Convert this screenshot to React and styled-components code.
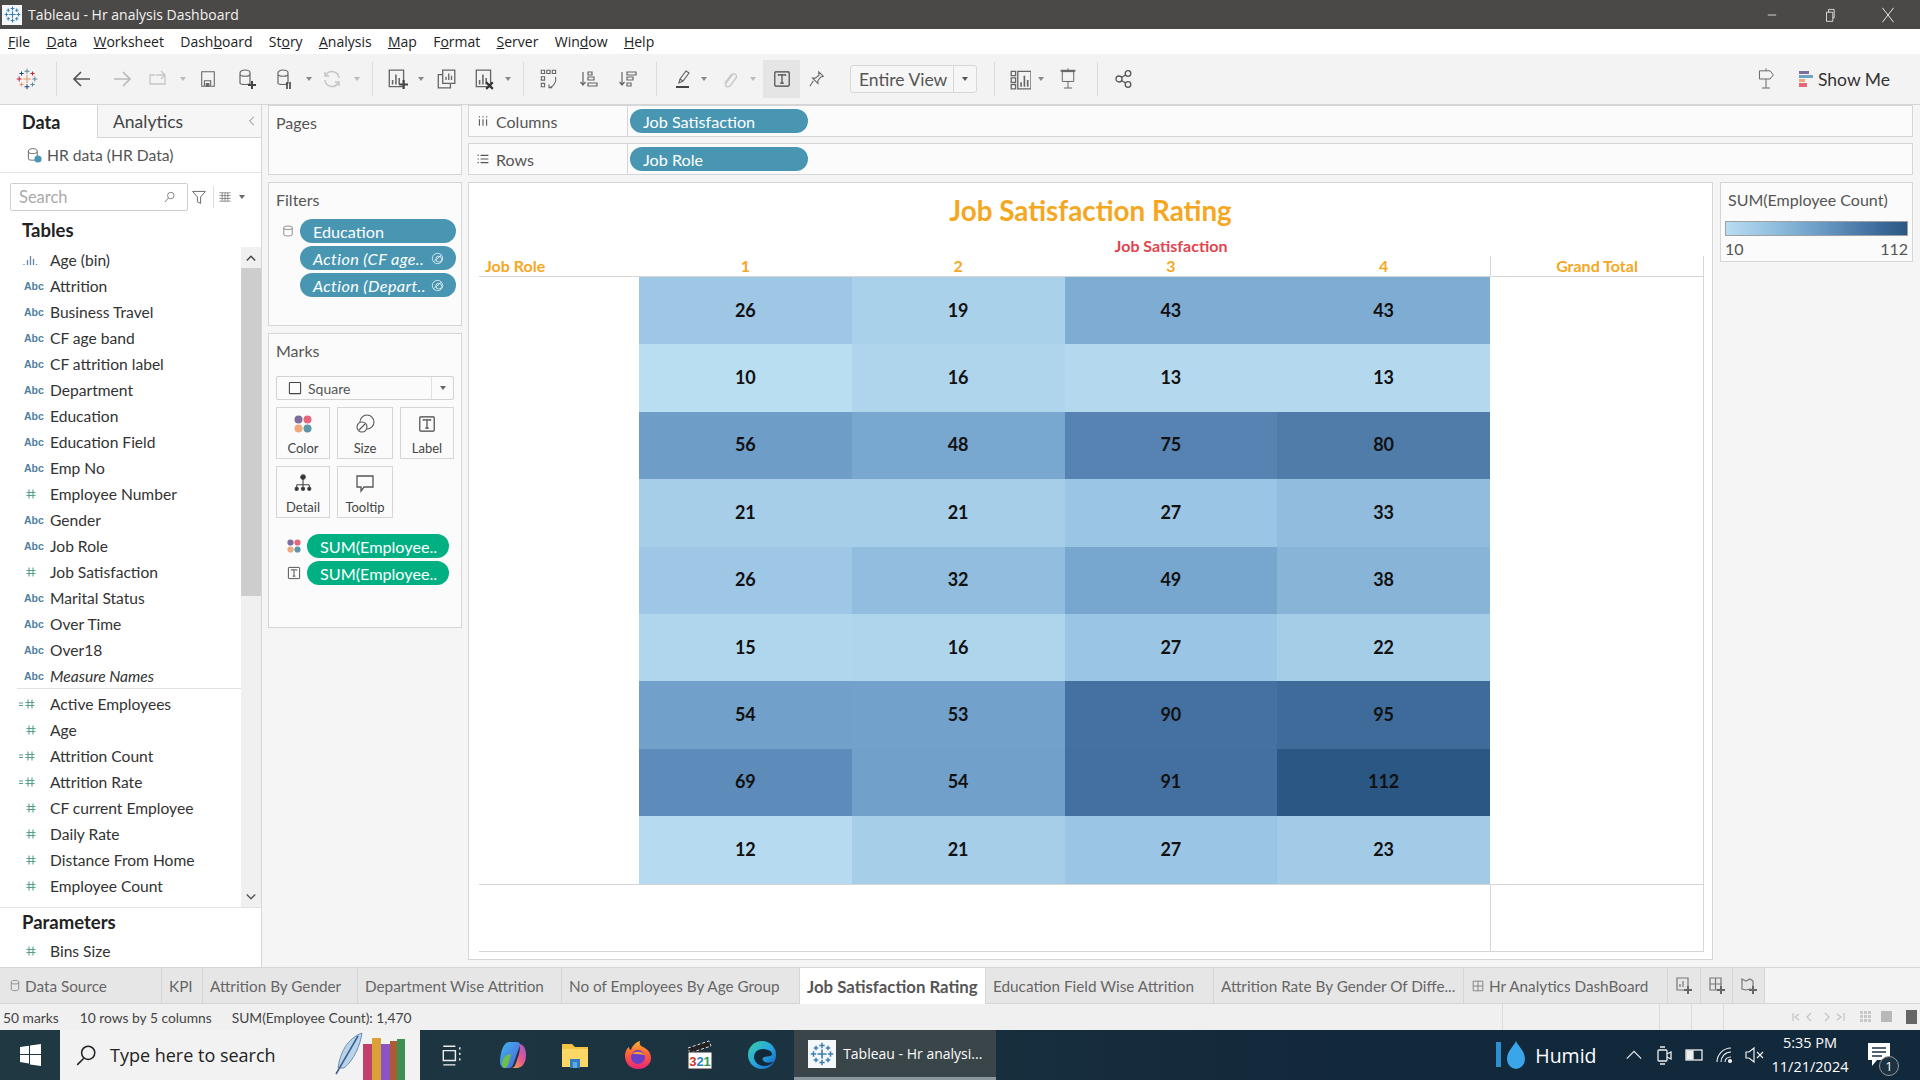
import React from "react";
import styled, { createGlobalStyle } from "styled-components";

const SEGOE = `"Open Sans","Noto Sans",sans-serif`;
const BOOK = `Lato,"Open Sans",sans-serif`;
const LINE = "#d6d6d6";

const Global = createGlobalStyle`
  html, body { margin: 0; padding: 0; background: #fff; }
  * { box-sizing: border-box; }
`;

const Shell = styled.div`
  width: 1920px; height: 1080px; overflow: hidden;
  display: flex; flex-direction: column;
  font-family: ${BOOK}; color: #333;
`;

/* ---------- title / menu ---------- */
const TitleBar = styled.div`
  height: 29px; flex: none; background: #4a4947; color: #f2f2f2;
  display: flex; align-items: center; padding: 0 3px 0 2px;
  font: 14px ${SEGOE};
`;
const TitleText = styled.span`margin-left: 6px; flex: 1;`;
const WinBtn = styled.div`
  width: 58px; height: 29px; display: flex; align-items: center; justify-content: center;
`;
const MenuBar = styled.div`
  height: 25px; flex: none; background: #fff; display: flex; align-items: center;
  gap: 16.3px; padding-left: 8px; font: 14px ${SEGOE}; color: #222;
`;
const MenuItem = styled.span``;

/* ---------- toolbar ---------- */
const Toolbar = styled.div`
  height: 51px; flex: none; background: #f3f3f3; border-bottom: 1px solid ${LINE};
  display: flex; align-items: center;
`;
const ToolSlot = styled.div`
  flex: none; display: flex; align-items: center; justify-content: center;
  width: ${p => p.$w}px; margin-left: ${p => p.$ml}px;
  height: ${p => p.$h || 30}px;
  background: ${p => p.$active ? "#e5e5e5" : "transparent"};
`;
const ToolSep = styled.div`
  flex: none; width: 1px; height: 34px; background: #dcdcdc; margin-left: ${p => p.$ml}px;
`;
const Caret = styled.span`
  display: block; width: 0; height: 0;
  border-left: 3px solid transparent; border-right: 3px solid transparent;
  border-top: 4px solid ${p => p.$c || "#777"};
`;
const ViewSelect = styled.div`
  flex: none; margin-left: ${p => p.$ml}px; width: 127px; height: 28px;
  border: 1px solid #d8d8d8; border-radius: 3px; background: #f6f6f6;
  display: flex; align-items: center; font-size: 17.5px; color: #555;
`;
const ViewSelectText = styled.span`flex: 1; padding-left: 8px; white-space: nowrap;`;
const ViewSelectArrow = styled.span`
  width: 23px; height: 100%; border-left: 1px solid #d8d8d8;
  display: flex; align-items: center; justify-content: center;
`;
const ToolSpacer = styled.div`flex: 1;`;
const ShowMe = styled.div`
  flex: none; display: flex; align-items: center; gap: 5px; margin-right: 30px; margin-left: 24px;
  font-size: 17.5px; color: #333;
`;

/* ---------- main ---------- */
const Main = styled.div`
  height: 862px; flex: none; display: flex; background: #f5f5f5;
`;
const DataPane = styled.div`
  width: 262px; flex: none; background: #fff; border-right: 1px solid ${LINE};
  display: flex; flex-direction: column;
`;
const PaneTabs = styled.div`display: flex; height: 33px; flex: none;`;
const PaneTab = styled.div`
  width: ${p => p.$w}px; flex: ${p => p.$grow ? 1 : "none"};
  display: flex; align-items: center; justify-content: space-between;
  font-size: ${p => p.$on ? 18 : 17.5}px; font-weight: ${p => p.$on ? 700 : 400};
  padding: 0 3px 0 ${p => p.$on ? 22 : 15}px;
  color: ${p => p.$on ? "#222" : "#444"};
  background: ${p => p.$on ? "#fff" : "#f6f6f6"};
  border-left: ${p => p.$on ? "none" : `1px solid ${LINE}`};
  border-bottom: ${p => p.$on ? "none" : `1px solid ${LINE}`};
`;
const SourceRow = styled.div`
  height: 35px; flex: none; display: flex; align-items: center; gap: 5px; padding-left: 26px;
  font-size: 15.7px; color: #555; border-bottom: 1px solid #e2e2e2;
`;
const SearchRow = styled.div`
  height: 38px; flex: none; display: flex; align-items: center; padding: 10px 0 0 10px;
`;
const SearchBox = styled.div`
  width: 178px; height: 28px; border: 1px solid #cfcfcf; border-radius: 2px; background: #fff;
  display: flex; align-items: center; justify-content: space-between; padding: 0 11px 0 8px;
  font-size: 16.5px; color: #aaa;
`;
const SearchTools = styled.div`display: flex; align-items: center; margin-left: 3px; gap: 0;`;
const ToolDiv = styled.div`width: 1px; height: 22px; background: #ddd; margin: 0 4px 0 6px;`;
const CaretSlot = styled.span`margin-left: 7px;`;
const SectionHead = styled.div`
  flex: none; height: ${p => p.$h}px; display: flex; align-items: center; padding: ${p => p.$pt || 0}px 0 ${p => p.$pb || 0}px 22px;
  font-size: 18.5px; font-weight: 700; color: #222;
  border-top: ${p => p.$line ? "1px solid #e2e2e2" : "none"};
`;
const ListWrap = styled.div`height: 660px; flex: none; display: flex;`;
const Fields = styled.div`width: 241px; flex: none;`;
const FieldRow = styled.div`
  height: 26px; display: flex; align-items: center; font-size: 15.6px; color: #333;
  font-style: ${p => p.$it ? "italic" : "normal"};
`;
const FieldIcon = styled.span`
  width: 50px; padding-left: 22px; flex: none; display: flex; align-items: center;
`;
const AbcMark = styled.span`
  font: 700 10.5px "Liberation Sans", sans-serif; color: #4f7f9f; margin-left: 2px;
`;
const FieldDivider = styled.div`height: 1px; background: #e2e2e2; margin: -1px 0 2px 17px;`;
const Scroll = styled.div`
  width: 20px; flex: none; background: #f0f0f0; display: flex; flex-direction: column;
`;
const ScrollBtn = styled.div`
  height: 21px; display: flex; align-items: center; justify-content: center; flex: none;
`;
const ScrollThumb = styled.div`height: 328px; flex: none; background: #cdcdcd;`;
const ScrollFill = styled.div`flex: 1;`;

const CardsCol = styled.div`
  width: 194px; flex: none; margin-left: 6px; display: flex; flex-direction: column; gap: 7px;
`;
const Card = styled.div`
  flex: none; height: ${p => p.$h}px; background: #fbfbfb; border: 1px solid ${LINE};
  padding: 7px 7px 0 7px; 
`;
const CardTitle = styled.div`font-size: 16px; line-height: 20px; color: #555;`;
const FilterList = styled.div`
  margin-top: 9px; display: flex; flex-direction: column; gap: 3px;
`;
const FilterRow = styled.div`
  display: grid; grid-template-columns: 24px 156px; margin-right: -5px; align-items: center;
`;
const Pill = styled.div`
  height: 24px; border-radius: 12px; background: ${p => p.$c || "#4996b3"}; color: #fff;
  display: flex; align-items: center; justify-content: space-between;
  padding: 0 12px 0 ${p => p.$pad || 13}px; width: ${p => p.$w ? p.$w + "px" : "auto"};
  font-size: 16.2px; font-style: ${p => p.$it ? "italic" : "normal"}; white-space: nowrap;
  letter-spacing: ${p => p.$it ? 0.4 : 0}px;
  margin-left: ${p => p.$ml || 0}px;
`;
const MarkSelect = styled.div`
  margin-top: 15px; height: 24px; border: 1px solid #d2d2d2; border-radius: 2px;
  background: #fbfbfb; display: flex; align-items: center; font-size: 14px; color: #555;
`;
const MarkSelectLabel = styled.span`
  flex: 1; display: flex; align-items: center; gap: 6px; padding-left: 11px;
`;
const MarkSelectArrow = styled.span`
  width: 22px; height: 100%; border-left: 1px solid #e0e0e0;
  display: flex; align-items: center; justify-content: center;
`;
const MarkGrid = styled.div`
  margin-top: 7px; display: grid; grid-template-columns: 54px 56px 54px;
  grid-auto-rows: 52px; gap: 7px;
`;
const MarkBtn = styled.div`
  border: 1px solid ${LINE}; display: flex; flex-direction: column; align-items: center;
  justify-content: flex-end; padding-bottom: 2px; font-size: 13px; color: #444; gap: 2px;
`;
const MarkIconBox = styled.div`height: 28px; display: flex; align-items: center; justify-content: center;`;
const MarkPills = styled.div`
  margin-top: 16px; display: flex; flex-direction: column; gap: 3px;
`;
const MarkRow = styled.div`
  display: grid; grid-template-columns: 31px 142px; align-items: center; justify-items: start;
`;
const MarkRowIcon = styled.div`display: flex; justify-content: center; width: 20px; margin-left: 8px;`;

const RightCol = styled.div`
  flex: 1; margin: 0 7px 7px 6px; display: flex; flex-direction: column; min-width: 0;
`;
const Shelf = styled.div`
  height: 32px; flex: none; margin-bottom: ${p => p.$mb}px; background: #fbfbfb;
  border: 1px solid ${LINE}; display: flex; align-items: center;
`;
const ShelfLabel = styled.div`
  width: 159px; height: 100%; flex: none; border-right: 1px solid ${LINE};
  display: flex; align-items: center; gap: 7px; padding-left: 8px; font-size: 16px; color: #555;
`;
const Canvas = styled.div`flex: 1; display: flex; gap: 7px; min-height: 0;`;
const ViewBox = styled.div`
  width: 1245px; flex: none; background: #fff; border: 1px solid ${LINE};
  display: flex; flex-direction: column; padding-left: 10px;
`;
const ChartTitle = styled.div`
  height: 54px; margin-bottom: 2px; flex: none; margin-left: -10px; display: flex; align-items: center; justify-content: center;
  font-size: 27.8px; font-weight: 700; color: #f5a71f;
`;
const AxisRow = styled.div`
  height: 17px; flex: none; width: 1224px; display: flex; padding-left: 160px;
`;
const AxisLabel = styled.div`
  flex: 1; text-align: center; font-size: 16px; line-height: 14px; font-weight: 700; color: #e3434f;
`;
const Chart = styled.div`
  width: 1225px; flex: none; border-right: 1px solid ${LINE};
`;
const GRID = "160px repeat(4, 212.75px) 1fr";
const HeadRow = styled.div`
  display: grid; grid-template-columns: ${GRID}; height: 21px; border-bottom: 1px solid ${LINE};
`;
const HeadCell = styled.div`
  font-size: 16px; font-weight: 700; color: #f5a71f; line-height: 20px;
  text-align: ${p => p.$left ? "left" : "center"};
  padding-left: ${p => p.$left ? 6 : 0}px;
  border-left: ${p => p.$line ? `1px solid ${LINE}` : "none"};
`;
const BodyGrid = styled.div`
  display: grid; grid-template-columns: ${GRID}; grid-auto-rows: 67.4px;
`;
const HeatCell = styled.div`
  display: flex; align-items: center; justify-content: center; padding-bottom: 2px;
  font-size: 18px; font-weight: 700; color: #111;
`;
const FootRow = styled.div`
  display: grid; grid-template-columns: 1011px 1fr; height: 68px;
  border-top: 1px solid ${LINE}; border-bottom: 1px solid ${LINE};
`;
const FootCell = styled.div`border-left: ${p => p.$line ? `1px solid ${LINE}` : "none"};`;
const Legend = styled.div`
  width: 193px; height: 80px; flex: none; background: #fbfbfb; border: 1px solid ${LINE};
  padding: 7px 4px 0 4px; 
`;
const LegendTitle = styled.div`font-size: 16px; line-height: 20px; color: #555; padding-left: 3px;`;
const LegendBar = styled.div`
  margin-top: 11px; height: 15px; border: 1px solid #a0a0a0;
  background: linear-gradient(90deg, #b9ddf1 0%, #98c4e2 22%, #6d9fc8 50%, #4a78a8 75%, #2a5783 100%);
`;
const LegendScale = styled.div`
  display: flex; justify-content: space-between; font-size: 16px; color: #555; line-height: 20px; margin-top: 3px;
`;

/* ---------- sheet tabs / status ---------- */
const TabsBar = styled.div`
  height: 37px; flex: none; background: #f3f3f3; border-top: 1px solid ${LINE};
  border-bottom: 1px solid ${LINE}; display: flex;
`;
const SheetTab = styled.div`
  width: ${p => p.$w}px; flex: none; display: flex; align-items: center; gap: 5px;
  justify-content: ${p => p.$center ? "center" : "flex-start"};
  padding-left: ${p => p.$center ? 0 : p.$pl || 7}px; white-space: nowrap; overflow: hidden;
  background: ${p => p.$on ? "#fff" : "#e6e6e6"}; border-right: 1px solid ${LINE};
  font-size: ${p => p.$on ? 16.8 : 15.3}px; font-weight: ${p => p.$on ? 700 : 400}; color: ${p => p.$on ? "#555" : "#666"};
  margin-bottom: ${p => p.$on ? -1 : 0}px;
`;
const StatusBar = styled.div`
  height: 26px; flex: none; background: #f0f0f0; display: flex; font-size: 13.8px; color: #444;
`;
const StatusLeft = styled.div`
  width: 1502px; flex: none; display: flex; align-items: center; padding-left: 3px;
`;
const StatusText = styled.span`margin-right: ${p => p.$mr}px; white-space: nowrap;`;
const StatusCell = styled.div`width: ${p => p.$w}px; flex: none; border-left: 1px solid #dcdcdc;`;
const StatusNav = styled.div`
  flex: 1; border-left: 1px solid #dcdcdc; display: flex; align-items: center; justify-content: flex-end;
  padding-right: 3px; gap: 8px;
`;

/* ---------- taskbar ---------- */
const Taskbar = styled.div`
  height: 50px; flex: none; display: flex; align-items: stretch; color: #fff;
  background: linear-gradient(90deg, #1f3841 0%, #1b3340 40%, #12283b 70%, #12283b 100%);
  font-family: ${SEGOE};
`;
const StartBtn = styled.div`width: 60px; flex: none; display: flex; align-items: center; justify-content: center;`;
const TaskSearch = styled.div`
  width: 360px; flex: none; background: #f2f2f2; color: #222; display: flex; align-items: center;
  padding-left: 15px; gap: 13px; font-size: 18px; position: relative; overflow: hidden;
`;
const SearchArt = styled.div`position: absolute; right: 14px; bottom: 0; height: 50px;`;
const TaskIcon = styled.div`
  width: 62.2px; flex: none; display: flex; align-items: center; justify-content: center;
`;
const ActiveTask = styled.div`
  width: 202px; flex: none; margin-left: 1px; background: #3a454a; border-bottom: 3px solid #8a979c;
  display: flex; align-items: center; gap: 7px; padding-left: 14px; font-size: 14px; white-space: nowrap;
`;
const LogoBox = styled.div`
  width: ${p => p.$s}px; height: ${p => p.$s}px; background: #f4f8fb; display: flex; align-items: center; justify-content: center;
`;
const Tray = styled.div`
  flex: 1; display: flex; align-items: center; justify-content: flex-end; padding-right: 29px;
`;
const Humid = styled.div`display: flex; align-items: center; gap: 8px; font-size: 19.5px; margin-right: 22.5px;`;
const TrayIcon = styled.div`
  width: 30px; display: flex; justify-content: center; align-items: center; flex: none;
`;
const Clock = styled.div`
  width: 84px; margin-left: -1px; text-align: center; font-size: 14.5px; line-height: 24px; flex: none;
`;
const Notif = styled.div`margin-left: 15px; position: relative; display: flex; flex: none;`;
const NotifCount = styled.span`
  position: absolute; right: -8px; bottom: -8px; width: 20px; height: 20px; border-radius: 50%;
  border: 1px solid #999; background: #1c3242; font-size: 13px; line-height: 18px; text-align: center;
`;

/* ---------- drawings ---------- */
const I = ({ s = 20, h, vb = "0 0 20 20", c = "#666", sw = 1.2, children, style }) => (
  <svg width={s} height={h || s} viewBox={vb} fill="none" stroke={c} strokeWidth={sw} style={style}>{children}</svg>
);
const Plus = ({ x = 11, y = 12, c = "#444" }) => (
  <path d={`M${x + 4} ${y}v8M${x} ${y + 4}h8`} stroke={c} strokeWidth="2" />
);
const Cyl = ({ c = "#666" }) => <path d="M3 4c0-4 10-4 10 0v10c0 2-10 2-10 0zM3 5c0 3 10 3 10 0" stroke={c} />;
const Bars = () => <path d="M6 15V11M9 15V6M12 15V9" strokeWidth="1.4" />;

const TableauMark = ({ s = 22, a = "#e8762c", b = "#5b879b", d = "#c72035", e = "#1f447a", f = "#59879b", w = 1.5 }) => {
  const X = (x, y, r, col, sw = w) => <path d={`M${x - r} ${y}h${2 * r}M${x} ${y - r}v${2 * r}`} stroke={col} strokeWidth={sw} />;
  return (
    <svg width={s} height={s} viewBox="0 0 24 24" fill="none">
      {X(12, 12, 4.5, a, w * 1.1)}{X(12, 3.5, 2.7, f)}{X(12, 20.5, 2.7, e)}
      {X(3.5, 12, 2.7, d)}{X(20.5, 12, 2.7, b)}{X(6, 6, 2.3, e)}{X(18, 6, 2.3, d)}{X(6, 18, 2.3, a)}{X(18, 18, 2.3, b)}
    </svg>
  );
};
const TBox = ({ s = 18, c = "#444" }) => (
  <I s={s} c={c} sw={1.3}><rect x="2" y="2" width="16" height="16" rx="1" /><path d="M6 6.5V5.5h8v1M10 5.5v9M8 14.5h4" /></I>
);
const ColorDots = ({ s = 18 }) => (
  <svg width={s} height={s} viewBox="0 0 18 18">
    <circle cx="4.5" cy="4.5" r="4" fill="#7d6e9e" /><circle cx="13.5" cy="4.5" r="4" fill="#e8667a" />
    <circle cx="4.5" cy="13.5" r="4" fill="#eea97c" /><circle cx="13.5" cy="13.5" r="4" fill="#5f97a8" />
  </svg>
);
const LinkMark = () => (
  <I s={13} c="#fff" sw={1.1}><circle cx="10" cy="10" r="8" /><circle cx="12" cy="11" r="4.5" /><path d="M4 15L16 5" /></I>
);
const Hash = () => (
  <I s={16} h={14} vb="0 0 16 14" c="#57a08e" sw={1.1}>
    <path d="M7 2.5v9M11 2.5v9M4.5 5.5h9M4.5 8.5h9" />
  </I>
);
const CalcHash = () => (
  <I s={20} h={14} vb="0 0 20 14" c="#57a08e" sw={1.1} style={{ marginLeft: -4 }}>
    <path d="M10 2.5v9M14 2.5v9M7.5 5.5h9M7.5 8.5h9M1 6h4M1 8.5h4" />
  </I>
);
const Hist = () => (
  <I s={16} h={14} vb="0 0 16 14" c="#5f87a5" sw={1.3}><path d="M2 12v-1M5.5 12V7M8.5 12V3M11.5 12V6M14.5 12v-1" /></I>
);

const FIELDS_A = [
  ["hist", "Age (bin)"], ["abc", "Attrition"], ["abc", "Business Travel"], ["abc", "CF age band"],
  ["abc", "CF attrition label"], ["abc", "Department"], ["abc", "Education"], ["abc", "Education Field"],
  ["abc", "Emp No"], ["hash", "Employee Number"], ["abc", "Gender"], ["abc", "Job Role"],
  ["hash", "Job Satisfaction"], ["abc", "Marital Status"], ["abc", "Over Time"], ["abc", "Over18"],
];
const FIELDS_B = [
  ["calc", "Active Employees"], ["hash", "Age"], ["calc", "Attrition Count"], ["calc", "Attrition Rate"],
  ["hash", "CF current Employee"], ["hash", "Daily Rate"], ["hash", "Distance From Home"], ["hash", "Employee Count"],
];
const fieldIcon = k => k === "abc" ? <AbcMark>Abc</AbcMark> : k === "hist" ? <Hist /> : k === "calc" ? <CalcHash /> : <Hash />;
const Field = ({ kind, label, it }) => (
  <FieldRow $it={it}><FieldIcon>{fieldIcon(kind)}</FieldIcon>{label}</FieldRow>
);

/* toolbar list: [kind, centre x, width, drawing] */
const Dd = ({ c = "#888" }) => <Caret $c={c} />;
const TOOLS = [
  ["i", 27, 22, <TableauMark s={22} w={1.1} a="#e69a62" />],
  ["s", 56],
  ["i", 82, 20, <I c="#555" sw={1.7}><path d="M2 10h16M9 3l-7 7 7 7" /></I>],
  ["i", 122, 20, <I c="#bbb" sw={1.7}><path d="M2 10h16M11 3l7 7-7 7" /></I>],
  ["i", 158, 20, <I c="#c6c6c6" sw={1.3}><path d="M7 6H2v9h15V7M8 6h9M13 2l4 4-4 4" /></I>],
  ["i", 183, 8, <Dd c="#bbb" />],
  ["i", 208, 18, <I s={18} c="#666"><path d="M3 2h14v16H3zM6 18v-6h7v6" /><path d="M8 15h3v3H8z" fill="#666" /></I>],
  ["i", 247, 20, <I><Cyl /><Plus /></I>],
  ["i", 285, 20, <I><Cyl /><path d="M12 13v7M15 13v7" stroke="#444" strokeWidth="1.6" /></I>],
  ["i", 309, 8, <Dd />],
  ["i", 332, 20, <I c="#c6c6c6" sw={1.5}><path d="M17 9A7 7 0 0 0 4 6M3 11a7 7 0 0 0 13 3M3 3v4h4M17 17v-4h-4" /></I>],
  ["i", 357, 8, <Dd c="#bbb" />],
  ["s", 372],
  ["i", 397, 22, <I s={22}><path d="M3 2h13v15H3z" /><Bars /><Plus x={12} y={11} /></I>],
  ["i", 421, 8, <Dd />],
  ["i", 446, 22, <I s={22}><path d="M7 2h11v12H7z" /><path d="M10 11V8M12.5 11V5M15 11V7" /><path d="M7 6H3v12h11v-4" /></I>],
  ["i", 484, 22, <I s={22}><path d="M3 2h13v15H3z" /><Bars /><path d="M12 13l6 6M18 13l-6 6" stroke="#333" strokeWidth="2" /></I>],
  ["i", 508, 8, <Dd />],
  ["s", 523],
  ["i", 549, 22, <I s={22} sw={1}><path d="M3 2h3v3H3zM8 2h3v3H8zM13 2h3v3h-3zM3 8h3v3H3zM3 14h3v3H3z" /><path d="M16 8c1 5-2 9-6 10M10 15v3h3" /></I>],
  ["i", 589, 20, <I><path d="M4 3v13M1.5 13L4 16l2.5-3" /><path d="M9 3h4v3H9zM9 8h6v3H9zM9 14h9v3H9z" /></I>],
  ["i", 628, 20, <I><path d="M4 3v13M1.5 13L4 16l2.5-3" /><path d="M9 3h9v3H9zM9 8h6v3H9zM9 14h4v3H9z" /></I>],
  ["s", 656],
  ["i", 683, 20, <I c="#666"><path d="M6 14l1-4 6-8 3 2-6 8zM7 10l3 2" /><path d="M3 18h13" stroke="#444" strokeWidth="2" /></I>],
  ["i", 704, 8, <Dd />],
  ["i", 729, 20, <I c="#c8c8c8" sw={1.4}><path d="M14 5l-7 9c-2 3 2 5 4 3l6-8c2-3-2-6-5-3l-6 8" /></I>],
  ["i", 753, 8, <Dd c="#bbb" />],
  ["a", 781.5, 37, <TBox />],
  ["i", 817, 18, <I s={18} c="#666"><path d="M12 2l5 5-3 1-3 4 0 3-6-6 3 0 4-3zM6 12l-4 6" /></I>],
  ["v", 850],
  ["s", 994],
  ["i", 1020, 22, <I s={22}><path d="M2 3h4v4H2zM2 9h4v4H2zM2 15h4v4H2zM8 3h12v16H8z" /><path d="M11 17v-4M14 17V7M17 17v-6" strokeWidth="1.5" /></I>],
  ["i", 1041, 8, <Dd />],
  ["i", 1068, 18, <I s={18} h={24} vb="0 0 22 28" c="#666"><path d="M2 4h18" strokeWidth="2.5" /><path d="M4 5h14v12H4zM11 17v8M6 25h10M11 1v3" /></I>],
  ["s", 1097],
  ["i", 1124, 20, <I c="#555" sw={1.3}><circle cx="5" cy="10" r="3" /><circle cx="14" cy="4.5" r="2.8" /><circle cx="14" cy="15.5" r="2.8" /><path d="M7.5 8.5l4-2.5M7.5 11.5l4 2.5" /></I>],
];
function toolRow() {
  let right = 0;
  return TOOLS.map(([k, x, w, node], i) => {
    if (k === "s") { const ml = x - right; right = x + 1; return <ToolSep key={i} $ml={ml} />; }
    if (k === "v") {
      const ml = x - right; right = x + 127;
      return <ViewSelect key={i} $ml={ml}><ViewSelectText>Entire View</ViewSelectText><ViewSelectArrow><Caret $c="#555" /></ViewSelectArrow></ViewSelect>;
    }
    const left = x - w / 2; const ml = left - right; right = left + w;
    return <ToolSlot key={i} $w={w} $ml={ml} $active={k === "a"} $h={k === "a" ? 38 : 30}>{node}</ToolSlot>;
  });
}

const MENU = [["F", "ile"], ["D", "ata"], ["W", "orksheet"], ["Dash", "b", "oard"], ["St", "o", "ry"], ["A", "nalysis"], ["M", "ap"], ["F", "o", "rmat"], ["S", "erver"], ["Win", "d", "ow"], ["H", "elp"]];
const menuLabel = (m) => m.length === 2
  ? <MenuItem key={m.join("")}><u>{m[0]}</u>{m[1]}</MenuItem>
  : <MenuItem key={m.join("")}>{m[0]}<u>{m[1]}</u>{m[2]}</MenuItem>;

const HEAT = [
  [26, 19, 43, 43], [10, 16, 13, 13], [56, 48, 75, 80], [21, 21, 27, 33], [26, 32, 49, 38],
  [15, 16, 27, 22], [54, 53, 90, 95], [69, 54, 91, 112], [12, 21, 27, 23],
];
const STOPS = [
  [10, [185, 221, 241]], [26, [157, 199, 229]], [43, [127, 172, 211]], [56, [110, 158, 200]],
  [69, [94, 140, 186]], [80, [80, 124, 170]], [91, [67, 112, 160]], [112, [42, 87, 131]],
];
function heat(v) {
  for (let i = 1; i < STOPS.length; i++) {
    if (v <= STOPS[i][0]) {
      const [a, ca] = STOPS[i - 1]; const [b, cb] = STOPS[i]; const t = (v - a) / (b - a);
      return `rgb(${ca.map((x, j) => Math.round(x + (cb[j] - x) * t)).join(",")})`;
    }
  }
  return "rgb(42,87,131)";
}

const TABS = [
  [162, "Data Source", "ds"], [41, "KPI"], [155, "Attrition By Gender"], [204, "Department Wise Attrition"],
  [238, "No of Employees By Age Group"], [186, "Job Satisfaction Rating", "on"], [228, "Education Field Wise Attrition"],
  [250, "Attrition Rate By Gender Of Diffe..."], [204, "Hr Analytics DashBoard", "db"],
];

export default function App() {
  return (
    <Shell>
      <Global />
      <TitleBar>
        <LogoBox $s={20}><TableauMark s={17} a="#3d7fb0" b="#3d7fb0" d="#3d7fb0" e="#3d7fb0" f="#3d7fb0" /></LogoBox>
        <TitleText>Tableau - Hr analysis Dashboard</TitleText>
        <WinBtn><I s={14} c="#eee"><path d="M4 10h12" /></I></WinBtn>
        <WinBtn><I s={14} c="#eee"><path d="M5 6h9v13H5zM8 6V2h8v12h-2" /></I></WinBtn>
        <WinBtn><I s={16} c="#eee"><path d="M3 1l14 18M17 1L3 19" /></I></WinBtn>
      </TitleBar>
      <MenuBar>{MENU.map(menuLabel)}</MenuBar>
      <Toolbar>
        {toolRow()}
        <ToolSpacer />
        <I s={18} h={24} vb="0 0 22 28" c="#666"><path d="M11 1v3M3 4h13l4 5-4 5H3zM11 14v11M6 25h10" /></I>
        <ShowMe>
          <svg width="14" height="16" viewBox="0 0 14 16">
            <rect width="10" height="3" fill="#7d6e9e" /><rect y="4" width="14" height="3" fill="#6ea4c0" />
            <rect y="8" width="6" height="3" fill="#eea97c" /><rect y="12" width="8" height="4" fill="#e8667a" />
          </svg>
          Show Me
        </ShowMe>
      </Toolbar>

      <Main>
        <DataPane>
          <PaneTabs>
            <PaneTab $w={97} $on>Data</PaneTab>
            <PaneTab $grow $w={0}>Analytics
              <I s={12} c="#555"><path d="M13 3l-7 7 7 7" /></I>
            </PaneTab>
          </PaneTabs>
          <SourceRow>
            <I s={16} c="#666"><path d="M3 5c0-4 11-4 11 0v10c0 2-11 2-11 0zM3 6c0 3 11 3 11 0" /><circle cx="15" cy="15" r="4.5" fill="#4996b3" stroke="none" /></I>
            HR data (HR Data)
          </SourceRow>
          <SearchRow>
            <SearchBox>Search
              <I s={13} c="#666"><circle cx="12" cy="7" r="5" /><path d="M8 11l-5 6" /></I>
            </SearchBox>
            <SearchTools>
              <I s={16} c="#666"><path d="M2 3h16l-6 7v8l-4-2v-6z" /></I>
              <ToolDiv />
              <I s={14} c="#666" sw={1}><path d="M2 4h16M2 8h16M2 12h16M2 16h16M6 4v12M10 4v12M14 4v12" /></I>
              <CaretSlot><Caret $c="#666" /></CaretSlot>
            </SearchTools>
          </SearchRow>
          <SectionHead $h={36} $pt={2}>Tables</SectionHead>
          <ListWrap>
            <Fields>
              {FIELDS_A.map(([k, l]) => <Field key={l} kind={k} label={l} />)}
              <Field kind="abc" label="Measure Names" it />
              <FieldDivider />
              {FIELDS_B.map(([k, l]) => <Field key={l} kind={k} label={l} />)}
            </Fields>
            <Scroll>
              <ScrollBtn><I s={12} c="#444" sw={2.4}><path d="M3 14l7-7 7 7" /></I></ScrollBtn>
              <ScrollThumb />
              <ScrollFill />
              <ScrollBtn><I s={12} c="#555" sw={2.4}><path d="M3 6l7 7 7-7" /></I></ScrollBtn>
            </Scroll>
          </ListWrap>
          <SectionHead $h={31} $pb={2} $line>Parameters</SectionHead>
          <Field kind="hash" label="Bins Size" />
        </DataPane>

        <CardsCol>
          <Card $h={70}><CardTitle>Pages</CardTitle></Card>
          <Card $h={144}>
            <CardTitle>Filters</CardTitle>
            <FilterList>
              <FilterRow>
                <I s={12} c="#666" style={{ marginLeft: 6 }}><path d="M3 4c0-3 14-3 14 0v12c0 3-14 3-14 0zM3 6c0 2 14 2 14 0" /></I>
                <Pill>Education</Pill>
              </FilterRow>
              <FilterRow><span /><Pill $it>Action (CF age..<LinkMark /></Pill></FilterRow>
              <FilterRow><span /><Pill $it>Action (Depart..<LinkMark /></Pill></FilterRow>
            </FilterList>
          </Card>
          <Card $h={295}>
            <CardTitle>Marks</CardTitle>
            <MarkSelect>
              <MarkSelectLabel>
                <I s={14} c="#444" sw={1.5}><rect x="2" y="2" width="16" height="16" rx="1" /></I>Square
              </MarkSelectLabel>
              <MarkSelectArrow><Caret $c="#666" /></MarkSelectArrow>
            </MarkSelect>
            <MarkGrid>
              <MarkBtn><MarkIconBox><ColorDots /></MarkIconBox>Color</MarkBtn>
              <MarkBtn><MarkIconBox>
                <I s={20} c="#555" sw={1.1}><circle cx="12" cy="8" r="7" fill="#fbfbfb" /><circle cx="7" cy="13" r="5" fill="#fbfbfb" /><path d="M4 16l6-6" /></I>
              </MarkIconBox>Size</MarkBtn>
              <MarkBtn><MarkIconBox><TBox /></MarkIconBox>Label</MarkBtn>
              <MarkBtn><MarkIconBox>
                <I s={18} c="#444" sw={1.2}><circle cx="10" cy="3.5" r="2.5" fill="#333" /><path d="M10 6v6M3 12h14M3 12v3M10 12v3M17 12v3" /><circle cx="3" cy="16.5" r="1.8" fill="#333" /><circle cx="10" cy="16.5" r="1.8" fill="#333" /><circle cx="17" cy="16.5" r="1.8" fill="#333" /></I>
              </MarkIconBox>Detail</MarkBtn>
              <MarkBtn><MarkIconBox>
                <I s={20} c="#555" sw={1.3}><path d="M2 3h16v11H9l-3 4v-4H2z" /></I>
              </MarkIconBox>Tooltip</MarkBtn>
            </MarkGrid>
            <MarkPills>
              <MarkRow><MarkRowIcon><ColorDots s={14} /></MarkRowIcon><Pill $w={142} $c="#00b083">SUM(Employee..</Pill></MarkRow>
              <MarkRow><MarkRowIcon><TBox s={14} /></MarkRowIcon><Pill $w={142} $c="#00b083">SUM(Employee..</Pill></MarkRow>
            </MarkPills>
          </Card>
        </CardsCol>

        <RightCol>
          <Shelf $mb={6}>
            <ShelfLabel>
              <I s={12} c="#555" sw={1.8}><path d="M4 7v11M10 7v11M16 7v11M4 2v2M10 2v2M16 2v2" /></I>Columns
            </ShelfLabel>
            <Pill $w={178} $ml={2}>Job Satisfaction</Pill>
          </Shelf>
          <Shelf $mb={7}>
            <ShelfLabel>
              <I s={12} c="#555" sw={1.8}><path d="M6 4h13M6 10h13M6 16h13M1 4h2M1 10h2M1 16h2" /></I>Rows
            </ShelfLabel>
            <Pill $w={178} $ml={2}>Job Role</Pill>
          </Shelf>
          <Canvas>
            <ViewBox>
              <ChartTitle>Job Satisfaction Rating</ChartTitle>
              <AxisRow><AxisLabel>Job Satisfaction</AxisLabel></AxisRow>
              <Chart>
                <HeadRow>
                  <HeadCell $left>Job Role</HeadCell>
                  {[1, 2, 3, 4].map(n => <HeadCell key={n}>{n}</HeadCell>)}
                  <HeadCell $line>Grand Total</HeadCell>
                </HeadRow>
                <BodyGrid>
                  {HEAT.map((row, r) => (
                    <React.Fragment key={r}>
                      <div />
                      {row.map((v, c) => (
                        <HeatCell key={c} style={{ backgroundColor: heat(v) }}>{v}</HeatCell>
                      ))}
                      <div />
                    </React.Fragment>
                  ))}
                </BodyGrid>
                <FootRow><FootCell /><FootCell $line /></FootRow>
              </Chart>
            </ViewBox>
            <Legend>
              <LegendTitle>SUM(Employee Count)</LegendTitle>
              <LegendBar />
              <LegendScale><span>10</span><span>112</span></LegendScale>
            </Legend>
          </Canvas>
        </RightCol>
      </Main>

      <TabsBar>
        {TABS.map(([w, t, k]) => (
          <SheetTab key={t} $w={w} $on={k === "on"} $pl={k === "ds" ? 10 : k === "db" ? 8 : 7}>
            {k === "ds" && <I s={10} h={13} vb="0 0 16 20" c="#777"><path d="M2 4c0-3 12-3 12 0v12c0 3-12 3-12 0zM2 6c0 2 12 2 12 0" /></I>}
            {k === "db" && <I s={12} c="#666"><path d="M2 2h16v16H2zM10 2v16M2 10h16" /></I>}
            {t}
          </SheetTab>
        ))}
        <SheetTab $w={33} $center><I s={20} c="#777"><path d="M3 2h11v12H3z" /><path d="M6 11V8M9 11V5" /><Plus x={10} y={10} c="#666" /></I></SheetTab>
        <SheetTab $w={32} $center><I s={20} c="#777"><path d="M3 2h11v12H3zM8.5 2v12M3 8h11" /><Plus x={10} y={10} c="#666" /></I></SheetTab>
        <SheetTab $w={32} $center><I s={20} c="#777"><path d="M3 3l4 2 4-2 3 2v9l-3-1-4 1-4-1z" /><Plus x={10} y={10} c="#666" /></I></SheetTab>
      </TabsBar>
      <StatusBar>
        <StatusLeft>
          <StatusText $mr={21}>50 marks</StatusText>
          <StatusText $mr={20}>10 rows by 5 columns</StatusText>
          <StatusText $mr={0}>SUM(Employee Count): 1,470</StatusText>
        </StatusLeft>
        <StatusCell $w={157} /><StatusCell $w={32} /><StatusCell $w={32} />
        <StatusNav>
          <I s={60} h={10} vb="0 0 60 10" c="#c4c4c4" sw={1.2}><path d="M2 1v8M8 2L4 5l4 3M20 1l-4 4 4 4M34 1l4 4-4 4M46 2l4 3-4 3M53 1v8" /></I>
          <svg width="58" height="14" viewBox="0 0 58 14">
            <g fill="#c8c8c8">{[0, 4, 8].flatMap(x => [0, 4, 8].map(y => <rect key={`${x}${y}`} x={x + 1} y={y + 1} width="3" height="3" />))}</g>
            <rect x="22" y="1" width="11" height="11" fill="#b8b8b8" />
            <rect x="47" y="0" width="11" height="14" fill="#666" />
          </svg>
        </StatusNav>
      </StatusBar>

      <Taskbar>
        <StartBtn>
          <svg width="21" height="22" viewBox="0 0 21 22" fill="#fff"><path d="M0 3l9-1.3V10H0zM10 1.500L21 0v10H10zM0 11h9v8.500L0 18zM10 11h11v11l-11-1.500z" /></svg>
        </StartBtn>
        <TaskSearch>
          <I s={22} c="#222" sw={1.4}><circle cx="12" cy="8" r="6" /><path d="M8 13l-6 6" /></I>
          Type here to search
          <SearchArt>
            <svg width="72" height="50" viewBox="0 0 72 50">
              <path d="M4 38C6 22 14 8 28 3 26 16 20 30 10 38z" fill="#b8d4ea" stroke="#6f8fb0" />
              <path d="M24 6L2 44" stroke="#3f5f8a" strokeWidth="1.5" />
              <rect x="29" y="14" width="9" height="36" fill="#c33f6b" />
              <rect x="38" y="8" width="9" height="42" fill="#d9a136" />
              <rect x="47" y="14" width="9" height="36" fill="#8b53c6" />
              <rect x="56" y="11" width="7" height="39" fill="#ad5b33" />
              <rect x="63" y="9" width="8" height="41" fill="#3d9050" />
            </svg>
          </SearchArt>
        </TaskSearch>
        <TaskIcon><I s={22} c="#eee" sw={1.3}><path d="M3 2h11M3 19h11M3 6h11v9H3zM18 3v2M18 8v2M18 13v2" /></I></TaskIcon>
        <TaskIcon>
          <svg width="30" height="30" viewBox="0 0 30 30">
            <defs>
              <linearGradient id="cp1" x1="0" y1="0" x2="1" y2="1"><stop offset="0" stopColor="#3fb6e8" /><stop offset="1" stopColor="#4f5fe0" /></linearGradient>
              <linearGradient id="cp2" x1="0" y1="1" x2="1" y2="0"><stop offset="0" stopColor="#f0b43a" /><stop offset=".5" stopColor="#e8588a" /><stop offset="1" stopColor="#9a58d8" /></linearGradient>
            </defs>
            <path d="M11 2h8c2 0 3 1 3 3l-7 20c-1 2-2 3-4 3H7c-3 0-5-3-5-6 0-8 3-20 9-20z" fill="url(#cp1)" />
            <path d="M21 4c5 0 7 5 7 11 0 8-4 13-9 13h-6c3 0 4-2 5-5l3-9c1-4 1-8 0-10z" fill="url(#cp2)" />
            <path d="M4 24c0-5 4-10 9-10l-2 8c-1 3-2 6-5 6-1 0-2-2-2-4z" fill="#6cc04a" />
          </svg>
        </TaskIcon>
        <TaskIcon>
          <svg width="28" height="28" viewBox="0 0 28 28">
            <path d="M1 3h10l3 3h13v20H1z" fill="#f5c342" /><path d="M1 8h26v18H1z" fill="#fbd865" />
            <path d="M9 27v-9h10v9h-3v-6h-4v6z" fill="#2f7fc4" /><rect x="12" y="21" width="4" height="6" fill="#63a8e0" />
          </svg>
        </TaskIcon>
        <TaskIcon>
          <svg width="30" height="30" viewBox="0 0 30 30">
            <defs><linearGradient id="ff" x1="0.5" y1="0" x2="0.5" y2="1"><stop offset="0" stopColor="#ffb52e" /><stop offset=".5" stopColor="#ff5a3c" /><stop offset="1" stopColor="#e8257a" /></linearGradient></defs>
            <path d="M15 29C7 29 2 23 2 16c0-4 2-8 4-9 0 2 1 3 2 3 1-4 5-8 9-9-1 3 0 5 3 6 4 2 8 5 8 11 0 6-5 11-13 11z" fill="url(#ff)" />
            <circle cx="15" cy="17" r="7" fill="#6a3fc8" /><path d="M9 14c3-3 10-3 13 1-4-1-9-1-13-1z" fill="#ff9a2e" />
          </svg>
        </TaskIcon>
        <TaskIcon>
          <svg width="32" height="32" viewBox="0 0 32 32">
            <path d="M4 9l21-7 2 5-21 7z" fill="#222" stroke="#ddd" strokeDasharray="3 2" />
            <rect x="4" y="13" width="24" height="17" fill="#fff" stroke="#333" />
            <text x="16" y="27" textAnchor="middle" fontFamily="Liberation Sans" fontWeight="700" fontSize="13"><tspan fill="#c73a2e">3</tspan><tspan fill="#2f7fc4">2</tspan><tspan fill="#2e9a4a">1</tspan></text>
          </svg>
        </TaskIcon>
        <TaskIcon>
          <svg width="30" height="30" viewBox="0 0 30 30">
            <defs><linearGradient id="ed" x1="0" y1="0" x2="1" y2="1"><stop offset="0" stopColor="#37d0a0" /><stop offset=".5" stopColor="#2aa8e0" /><stop offset="1" stopColor="#1460c0" /></linearGradient></defs>
            <circle cx="15" cy="15" r="14" fill="url(#ed)" />
            <path d="M16 9c-6 0-9 4-9 8 0 5 5 9 10 9 4 0 8-2 10-5-3 2-7 2-9 1-2-1-3-3-2-4 1-2 7-1 9-3 1-3-4-6-9-6z" fill="#12283b" />
          </svg>
        </TaskIcon>
        <ActiveTask>
          <LogoBox $s={28}><TableauMark s={24} a="#3d7fb0" b="#3d7fb0" d="#3d7fb0" e="#3d7fb0" f="#3d7fb0" /></LogoBox>
          Tableau - Hr analysi...
        </ActiveTask>
        <Tray>
          <Humid>
            <svg width="32" height="28" viewBox="0 0 32 28">
              <rect x="1" y="1" width="5" height="25" fill="#2b8fd0" />
              <path d="M21 0c2 5 9 10 9 18a9 10 0 0 1-18 0C12 10 19 5 21 0z" fill="#3aa5e8" />
            </svg>
            Humid
          </Humid>
          <TrayIcon><I s={18} c="#eee" sw={1.3}><path d="M2 14l8-8 8 8" /></I></TrayIcon>
          <TrayIcon><I s={20} c="#eee" sw={1.3}><rect x="4" y="5" width="9" height="11" rx="1" /><path d="M13 9l4-2v7l-4-2M6 2h5M6 19h5" /></I></TrayIcon>
          <TrayIcon><I s={20} c="#eee" sw={1.3}><rect x="2" y="5" width="16" height="10" /><rect x="3" y="6" width="6" height="8" fill="#eee" /></I></TrayIcon>
          <TrayIcon><I s={20} c="#eee" sw={1.1}><path d="M3 17C3 10 9 3 17 3M7 17c0-5 4-10 10-10M11 17c0-3 2-5 6-5" /><circle cx="16" cy="16" r="1.5" fill="#eee" /></I></TrayIcon>
          <TrayIcon><I s={20} c="#eee" sw={1.2}><path d="M2 7h3l5-4v14l-5-4H2zM13 7l6 6M19 7l-6 6" /></I></TrayIcon>
          <Clock>5:35 PM<br />11/21/2024</Clock>
          <Notif>
            <svg width="24" height="26" viewBox="0 0 24 26"><path d="M1 1h22v17H10l-5 6v-6H1z" fill="#fff" /><path d="M5 6h14M5 10h14M5 14h10" stroke="#1c3242" strokeWidth="1.5" /></svg>
            <NotifCount>1</NotifCount>
          </Notif>
        </Tray>
      </Taskbar>
    </Shell>
  );
}
